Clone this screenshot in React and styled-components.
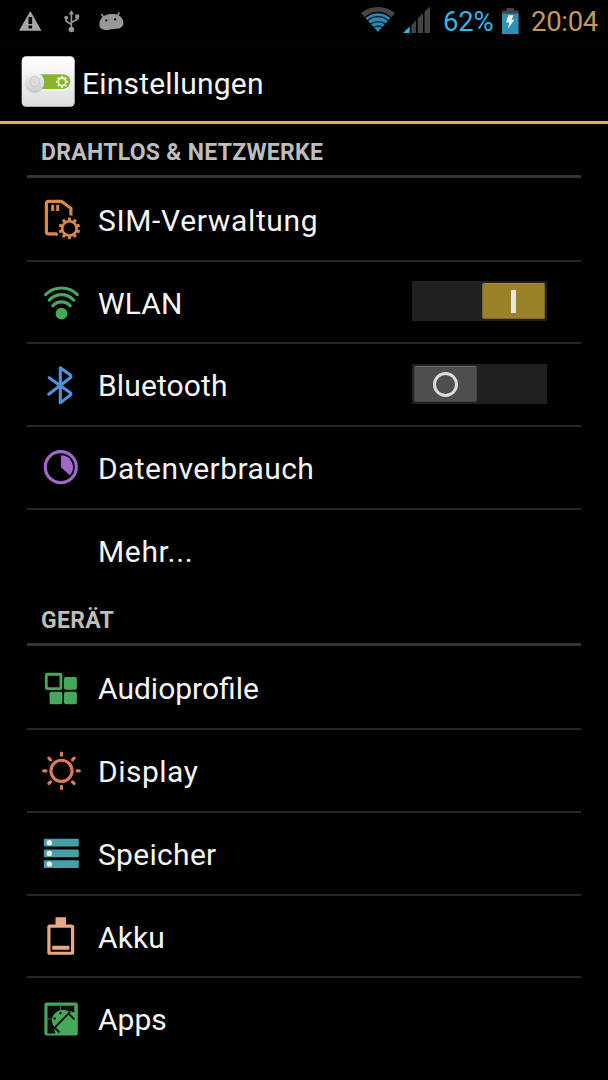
import React from "react";
import styled, { createGlobalStyle } from "styled-components";

const GlobalStyle = createGlobalStyle`
  * { box-sizing: border-box; }
  body { margin: 0; background: #000; font-family: Roboto, sans-serif; overflow: hidden; }
  svg { display: block; flex: none; }
`;

const Screen = styled.div`
  width: 608px;
  height: 1080px;
  overflow: hidden;
  background: #000;
  color: #f5f5f5;
`;

const StatusBar = styled.div`
  display: flex;
  justify-content: space-between;
  height: 43px;
  border-bottom: 1px solid #060606;
`;

const StatusText = styled.span`
  width: ${(p) => p.$width}px;
  margin-left: ${(p) => p.$gap}px;
  font-size: 27.5px;
  line-height: 44px;
  letter-spacing: ${(p) => p.$spacing}px;
  white-space: nowrap;
  color: ${(p) => p.$color};
`;

const StatusGroup = styled.div`
  display: flex;
`;

const Header = styled.header`
  display: flex;
  align-items: center;
  height: 81px;
  padding: 0 0 1px 20px;
  border-bottom: 3px solid #d9b652;
`;

const Title = styled.h1`
  margin: 4px 0 0 5px;
  font-size: 30px;
  font-weight: 400;
  line-height: 36px;
  letter-spacing: ${(p) => p.$spacing}px;
`;

const List = styled.main`
  padding: 0 27px;
`;

const SectionTitle = styled.h2`
  height: 53.5px;
  margin: 0 0 1.25px;
  padding: 13.5px 0 0 14px;
  border-bottom: 3px solid #333;
  font-size: 23px;
  font-weight: 700;
  line-height: 29px;
  letter-spacing: 0.28px;
  color: #bdbdbd;
`;

const Row = styled.div`
  display: flex;
  align-items: center;
  height: 82.75px;
  padding: 0 34px 0 13px;
  border-bottom: 2px solid ${(p) => (p.$last ? "transparent" : "#262626")};
`;

const IconSlot = styled.div`
  width: 42px;
  height: 42px;
  margin-right: 16px;
`;

const Label = styled.span`
  flex: 1;
  padding-top: 3.5px;
  font-size: 30px;
  line-height: 36px;
  letter-spacing: ${(p) => p.$spacing || 0}px;
  white-space: nowrap;
`;

const Track = styled.div`
  display: flex;
  justify-content: ${(p) => (p.$on ? "flex-end" : "flex-start")};
  width: 135px;
  height: 40px;
  margin-bottom: 1px;
  padding: 2px;
  background: #202020;
`;

const Thumb = styled.div`
  display: flex;
  align-items: center;
  justify-content: center;
  width: 63px;
  height: 36px;
  border: 1px solid ${(p) => (p.$on ? "#7d681d" : "#444")};
  border-top-color: ${(p) => (p.$on ? "#a98b3b" : "#696969")};
  border-radius: 2px;
  background: ${(p) => (p.$on ? "#9a8026" : "#4e4e4e")};
`;

const OnMark = styled.i`
  width: 5px;
  height: 23px;
  background: #e6e6e2;
`;

const OffMark = styled.i`
  width: 25px;
  height: 25px;
  border: 3.5px solid #dcdcdc;
  border-radius: 50%;
`;

const Switch = ({ on }) => (
  <Track $on={on}>
    <Thumb $on={on}>{on ? <OnMark /> : <OffMark />}</Thumb>
  </Track>
);

const Teeth = ({ cx, cy, r, n, len, width, color, cap }) =>
  Array.from({ length: n }, (_, i) => (
    <path
      key={i}
      d={`M${cx} ${cy - r}v${-len}`}
      stroke={color}
      strokeWidth={width}
      strokeLinecap={cap}
      transform={`rotate(${(360 / n) * i} ${cx} ${cy})`}
    />
  ));

const NoticeIcons = () => (
  <svg width="130" height="42" viewBox="0 0 130 42" fill="#a6a6a6">
    <path fillRule="evenodd" d="M30.3 11 41.5 30.7H19ZM28.5 17h3.6v7h-3.6ZM28.5 25.5h3.6v3h-3.6Z" />
    <g fill="none" stroke="#989898" strokeWidth="1.6">
      <path d="M71.4 28V13M71.4 24.5l-5.2-3.2v-3.5M71.4 22.5l6-3.3v-3" />
    </g>
    <path fill="#989898" d="m71.4 10 2.7 4.4h-5.4ZM75.2 14.5h4v4h-4Z" />
    <circle cx="66.2" cy="17.7" r="2" fill="#989898" />
    <circle cx="71.4" cy="29.5" r="2.8" fill="#989898" />
    <path d="M101.2 14l3 3.5M119.3 12.4l-2 4" stroke="#989898" strokeWidth="1.5" />
    <path fill="#989898" d="M99.3 24.5c0-5 3.5-9 8.5-10 2.5-.6 5-.6 7.800-.2 4 .5 7.600 4.200 7.800 8.200.2 3.600-2.300 6-6 6.200-3 .1-5 .2-7.400.8-2 .5-4 .8-6.200.3-2.800-.6-4.500-2.500-4.500-5.300Z" />
    <circle cx="106.3" cy="20.4" r="1.1" fill="#000" />
    <circle cx="115.1" cy="19.4" r="1.1" fill="#000" />
  </svg>
);

const SignalIcons = () => (
  <svg width="74" height="42" viewBox="358 0 74 42">
    <path d="M361 13C370 5 386 5 395 13L391.500 17.200C383 10 373 10 364.500 17.200Z" fill="#444" />
    <path d="M365.500 18C373 11.500 383 11.500 390.500 18L378 32Z" fill="#2b87ad" />
    <g fill="none" stroke="#061820" strokeWidth="1.3">
      <path d="M368 20.200C374 15.500 382 15.500 388 20.200" />
      <path d="M370.500 24C375 20.700 381 20.700 385.500 24" />
      <path d="M373.500 27.500C376 25.600 380 25.600 382.500 27.500" />
    </g>
    <path d="M403 33 409.700 26.500V33Z" fill="#33b5e5" />
    <path d="M411.300 33V25.200L416 20.200V33ZM417.700 33V18.500L423 13V33ZM424.500 33V11.700L430 6.200V33Z" fill="#444" />
  </svg>
);

const BatteryStatusIcon = () => (
  <svg width="19" height="42" viewBox="501 0 19 42">
    <path d="M506.500 8h7.500v2.500h4.500v4H502v-4h4.500Z" fill="#444" />
    <path d="M502 13.700h16.600V34H502Z" fill="#2f8fb7" />
    <path d="M508.300 15.200h5l-1.500 4.500h2.700l-6.800 9.300 1.600-6.500h-3.300Z" fill="#ececec" />
  </svg>
);

const SettingsLogo = () => (
  <svg width="57" height="56" viewBox="20 54 57 56">
    <defs>
      <linearGradient id="tile" x2="0" y2="1">
        <stop stopColor="#fff" />
        <stop offset="1" stopColor="#dedddd" />
      </linearGradient>
      <linearGradient id="knob" x2="0" y2="1">
        <stop stopColor="#f2f2f2" />
        <stop offset="1" stopColor="#cfcfcf" />
      </linearGradient>
    </defs>
    <rect x="21.700" y="56.200" width="53" height="50.600" rx="4.500" fill="url(#tile)" />
    <rect x="29" y="73.300" width="42.500" height="17.400" rx="8.700" fill="#f7f7f3" />
    <rect x="30" y="74.200" width="40.400" height="14.800" rx="7.400" fill="#86b52b" />
    <circle cx="62" cy="81.800" r="3.800" fill="none" stroke="#f3f7dd" strokeWidth="1.900" />
    <Teeth cx={62} cy={81.8} r={4.5} n={8} len={1.6} width={1.9} color="#f3f7dd" />
    <circle cx="34.700" cy="83.200" r="9.700" fill="#aaa" opacity=".55" />
    <circle cx="34.700" cy="82" r="9.600" fill="url(#knob)" />
    <circle cx="34.700" cy="81.500" r="5.100" fill="#dcdcdc" stroke="#c9c9c9" />
  </svg>
);

const Glyph = ({ y, children }) => (
  <svg width="42" height="42" viewBox={`40 ${y} 42 42`} fill="none">
    {children}
  </svg>
);

const SimIcon = () => (
  <Glyph y={198}>
    <path d="M57.500 235.200 56 233.800H48.400Q46.400 233.800 46.400 231.800V203.400Q46.400 201.400 48.400 201.400H61.500L70.900 208.300V215.500" stroke="#d98a4b" strokeWidth="3.200" />
    <path d="M52.700 204.700v6.200M57.700 204.700v6.200" stroke="#d98a4b" strokeWidth="2.900" />
    <circle cx="69.400" cy="228.400" r="7.200" stroke="#d98a4b" strokeWidth="2.600" />
    <Teeth cx={69.4} cy={228.4} r={7.7} n={10} len={3.1} width={3} color="#d98a4b" />
  </Glyph>
);

const WifiIcon = () => (
  <Glyph y={281}>
    <g stroke="#45a85a" strokeWidth="3.200" strokeLinecap="round">
      <path d="M45.600 294.600C54 285.800 69 285.800 77.400 294.600" />
      <path d="M49.300 300.100C56.500 292.800 66.500 292.800 73.700 300.100" />
      <path d="M52.800 305.800C57.500 300.600 65.500 300.600 70.200 305.800" />
    </g>
    <circle cx="61.500" cy="313.700" r="5.900" fill="#45a85a" />
  </Glyph>
);

const BluetoothIcon = () => (
  <Glyph y={363.5}>
    <path d="M49.200 377.200 70.300 392.200Q71.500 393.300 70.300 394.600L60.300 402.400V367.200L70.300 374.600Q71.500 375.900 70.300 377.200L48.800 393.700" stroke="#4e93d9" strokeWidth="3.100" strokeLinejoin="round" strokeLinecap="round" />
  </Glyph>
);

const DataIcon = () => (
  <Glyph y={446.25}>
    <circle cx="60.800" cy="467.400" r="15.500" stroke="#9d68c8" strokeWidth="3.200" />
    <path d="M61 455.600A11.900 11.900 0 0 1 69.800 475.600L61 467.400Z" fill="#9d68c8" />
  </Glyph>
);

const AudioIcon = () => (
  <Glyph y={667.25}>
    <rect x="46.300" y="674.500" width="14.600" height="14.400" rx="1" stroke="#45a85a" strokeWidth="2.800" />
    <g fill="#45a85a">
      <rect x="64" y="677.200" width="12.900" height="12.800" rx="1.800" />
      <rect x="49.500" y="692" width="12.900" height="12.500" rx="1.800" />
      <rect x="64" y="692" width="12.900" height="12.500" rx="1.800" />
    </g>
  </Glyph>
);

const DisplayIcon = () => (
  <Glyph y={749.5}>
    <circle cx="61.500" cy="771.300" r="10.600" stroke="#df7b51" strokeWidth="3.100" />
    <Teeth cx={61.5} cy={771.3} r={15.6} n={8} len={2.2} width={3.2} color="#df7b51" cap="round" />
  </Glyph>
);

const StorageIcon = () => (
  <Glyph y={832.5}>
    {[839.3, 850, 860.7].map((y) => (
      <g key={y}>
        <rect x="43.800" y={y} width="35" height="7.700" rx="1" fill="#489fa8" />
        <circle cx="49.300" cy={y + 3.9} r="2.700" fill="#e8f5f6" />
      </g>
    ))}
  </Glyph>
);

const AkkuIcon = () => (
  <Glyph y={915.25}>
    <rect x="48.900" y="926.300" width="23.700" height="27.200" rx="1" stroke="#e9a985" strokeWidth="3.200" />
    <rect x="55.500" y="917.500" width="10.500" height="9" fill="#e9a985" />
    <rect x="52.200" y="946" width="17.200" height="4" fill="#e9a985" />
  </Glyph>
);

const AppsIcon = () => (
  <Glyph y={998.5}>
    <rect x="44.400" y="1003" width="33.400" height="33" rx="2" fill="#45a85a" />
    <path d="M47.500 1006.300H74.300V1013L69.500 1011.500 53.500 1028.500 55.500 1034H47.500Z" fill="#020c04" />
    <path d="M60.500 1005v5M47 1019.500h6" stroke="#2f7c40" strokeWidth="1" />
    <path d="M54.500 1027.500C50.800 1023.500 51 1017 55.500 1013.200 59.500 1009.300 65.500 1009.300 69 1012.500Z" fill="#45a85a" />
    <path d="M51.500 1031.500 70 1012.500M54.500 1028l5 5M68 1013.500l6.500 6.500M50 1025v7h5" stroke="#041207" strokeWidth="1.800" />
    <circle cx="60.500" cy="1013.500" r="1.200" fill="#041207" />
    <circle cx="54.700" cy="1019" r="1.200" fill="#041207" />
  </Glyph>
);

const sections = [
  {
    title: "DRAHTLOS & NETZWERKE",
    rows: [
      { label: "SIM-Verwaltung", icon: SimIcon, spacing: 0.65 },
      { label: "WLAN", icon: WifiIcon, on: true, spacing: 0.1 },
      { label: "Bluetooth", icon: BluetoothIcon, on: false, spacing: 0.12 },
      { label: "Datenverbrauch", icon: DataIcon, spacing: 0.43 },
      { label: "Mehr...", spacing: 0.65 },
    ],
  },
  {
    title: "GERÄT",
    rows: [
      { label: "Audioprofile", icon: AudioIcon },
      { label: "Display", icon: DisplayIcon, spacing: 0.5 },
      { label: "Speicher", icon: StorageIcon, spacing: 0.3 },
      { label: "Akku", icon: AkkuIcon, spacing: 0.1 },
      { label: "Apps", icon: AppsIcon },
    ],
  },
];

export default function App() {
  return (
    <Screen>
      <GlobalStyle />
      <StatusBar>
        <NoticeIcons />
        <StatusGroup>
          <SignalIcons />
          <StatusText $width={58} $gap={11} $spacing={-0.2} $color="#33b5e5">62%</StatusText>
          <BatteryStatusIcon />
          <StatusText $width={77} $gap={11} $spacing={-0.3} $color="#c19a5b">20:04</StatusText>
        </StatusGroup>
      </StatusBar>
      <Header>
        <SettingsLogo />
        <Title $spacing={0.2}>Einstellungen</Title>
      </Header>
      <List>
        {sections.map(({ title, rows }) => (
          <section key={title}>
            <SectionTitle>{title}</SectionTitle>
            {rows.map(({ label, icon: Icon, on, spacing }, i) => (
              <Row key={label} $last={i === rows.length - 1}>
                <IconSlot>{Icon && <Icon />}</IconSlot>
                <Label $spacing={spacing}>{label}</Label>
                {on !== undefined && <Switch on={on} />}
              </Row>
            ))}
          </section>
        ))}
      </List>
    </Screen>
  );
}
